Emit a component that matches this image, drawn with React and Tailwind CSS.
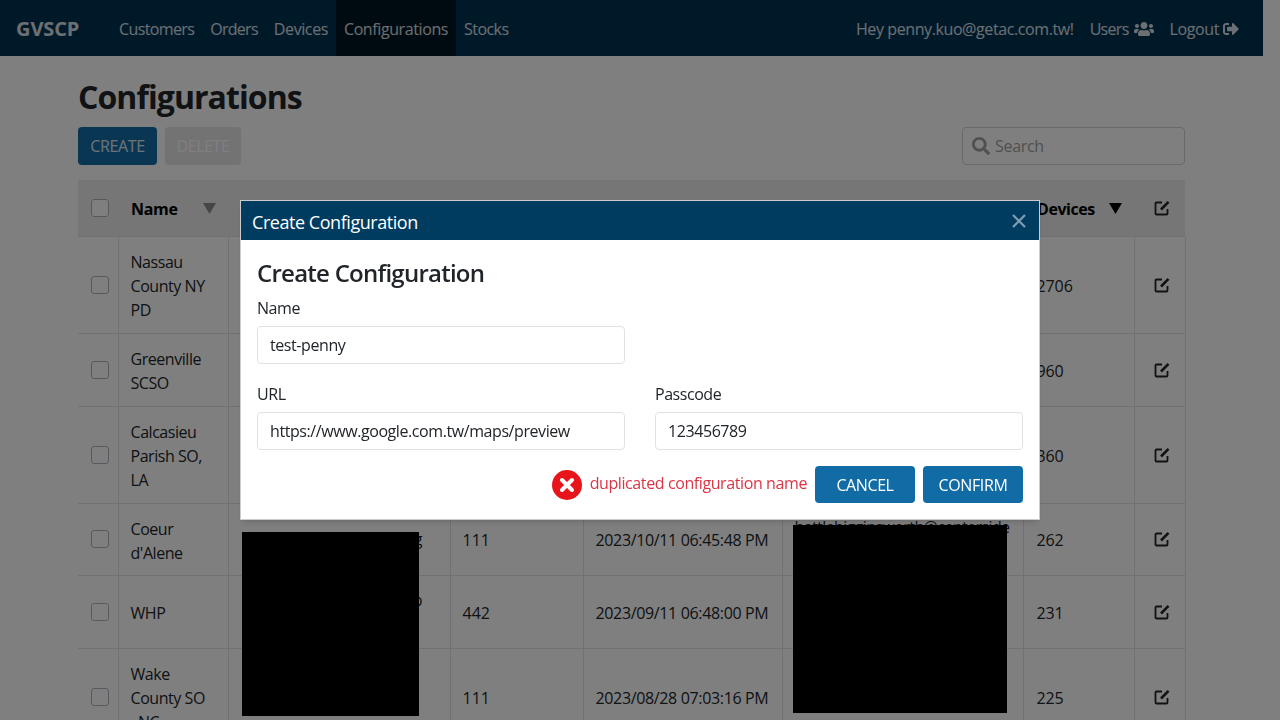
import React from 'react';
import { FaUsers, FaSignOutAlt, FaSearch } from 'react-icons/fa';

const navLinks = [
  { label: 'Customers', tracking: 'tracking-[-0.62px]' },
  { label: 'Orders', tracking: 'tracking-[-0.72px]' },
  { label: 'Devices', tracking: 'tracking-[-0.4px]' },
  { label: 'Configurations', tracking: 'tracking-[-0.4px]' },
  { label: 'Stocks', tracking: 'tracking-[-0.55px]' },
];

const rows = [
  { name: ['Nassau', 'County NY', 'PD'], devices: '2706' },
  { name: ['Greenville', 'SCSO'], devices: '960' },
  { name: ['Calcasieu', 'Parish SO,', 'LA'], devices: '360' },
  {
    name: ['Coeur', "d'Alene"],
    pad: 'pt-[13px] pb-[10px]',
    peek: ['g'],
    count: '111',
    date: '2023/10/11 06:45:48 PM',
    email: ['battlehigginsworth@centerside', '\u00a0'],
    devices: '262',
  },
  { name: ['WHP'], peek: ['p', '\u00a0'], count: '442', date: '2023/09/11 06:48:00 PM', devices: '231' },
  { name: ['Wake', 'County SO', ', NC'], count: '111', date: '2023/08/28 07:03:16 PM', devices: '225' },
];

const Lines = ({ items = [] }) => items.map((line, i) => <div key={i}>{line}</div>);

const EditIcon = () => (
  <svg width="16" height="16" viewBox="0 0 16 16" className="inline-block" fill="none" stroke="currentColor">
    <path d="M8 2.5H2.5a1 1 0 0 0-1 1v10a1 1 0 0 0 1 1h10a1 1 0 0 0 1-1V9" strokeWidth="1.8" />
    <path d="M7 9.5 14.5 1.8" strokeWidth="2.6" />
  </svg>
);

const SortArrow = ({ className }) => (
  <svg width="13" height="11" viewBox="0 0 13 11" className={className}>
    <polygon points="0,0 13,0 6.5,11" fill="currentColor" />
  </svg>
);

const Checkbox = () => (
  <span className="block w-[18px] h-[18px] bg-white border border-[#adb5bd] rounded-[3px] ml-[13px]" />
);

const Field = ({ label, value }) => (
  <div>
    <div className="h-[24px] leading-[24px] mb-[6px] text-[#212529] tracking-[-0.45px]">{label}</div>
    <div className="h-[38px] border border-[#dee2e6] rounded-[4px] pl-[12px] leading-[36px] text-[#212529] tracking-[-0.42px]">
      {value}
    </div>
  </div>
);

const App = () => {
  return (
    <div className="relative w-[1280px] h-[720px] overflow-hidden bg-white font-['Open_Sans','Noto_Sans',sans-serif] text-[16px] text-[#212529]">
      <div className="w-[1263px]">

        {/* NAVBAR */}
        <nav className="h-[56px] bg-[#003253] flex items-center justify-between pl-[16px] pr-[16px] text-white/85 tracking-[-0.4px]">
          <div className="flex items-center h-full">
            <span className="text-[20px] font-bold w-[95px] pt-[2px] tracking-[-0.1px] text-white/85">GVSCP</span>
            {navLinks.map((link) => (
              <a
                key={link.label}
                className={`h-full flex items-center px-2 pt-[2px] ${link.tracking} ${link.label === 'Configurations' ? 'bg-[#001622]' : ''}`}
              >
                {link.label}
              </a>
            ))}
          </div>
          <div className="flex items-center h-full pt-[2px]">
            <span className="px-2 tracking-[-0.4px]">Hey penny.kuo@getac.com.tw!</span>
            <a className="px-2 flex items-center gap-[5px] tracking-[-0.7px]">Users <FaUsers className="w-[20px] h-[16px]" /></a>
            <a className="px-2 flex items-center gap-[4px]">Logout <FaSignOutAlt className="w-[16px] h-[16px]" /></a>
          </div>
        </nav>

        <main className="px-[78px]">
          <h1 className="text-[32px] leading-[40px] font-bold mt-[21px] mb-[10px] tracking-[-0.93px]">Configurations</h1>

          {/* TOOLBAR */}
          <div className="flex items-center justify-between mb-[15px]">
            <div className="flex gap-[8px]">
              <button className="h-[38px] w-[79px] bg-[#116ca6] rounded-[4px] text-white/85 tracking-[-0.4px]">CREATE</button>
              <button className="h-[38px] w-[76px] bg-[#e6e6e6] rounded-[4px] text-[#ffffff] tracking-[-0.4px]">DELETE</button>
            </div>
            <div className="w-[223px] h-[38px] border border-[#ced4da] rounded-[4px] flex items-center pl-[9px] gap-[5px] text-[#a0a0a0] tracking-[-0.3px]">
              <FaSearch className="w-[18px] h-[18px]" />
              Search
            </div>
          </div>

          {/* TABLE */}
          <table className="w-[1107px] table-fixed border-collapse">
            <colgroup>
              <col className="w-[40px]" />
              <col className="w-[110px]" />
              <col className="w-[222px]" />
              <col className="w-[133px]" />
              <col className="w-[199px]" />
              <col className="w-[241px]" />
              <col className="w-[111px]" />
              <col className="w-[51px]" />
            </colgroup>
            <thead>
              <tr className="h-[56px] bg-[#ececec] text-left">
                <th className="px-0"><Checkbox /></th>
                <th className="pl-[13px] pt-[2px] font-bold tracking-[-0.3px] text-black">
                  <div className="flex items-center justify-between pr-[12px]">
                    Name <SortArrow className="text-[#8c8c8c]" />
                  </div>
                </th>
                <th />
                <th />
                <th />
                <th />
                <th className="pl-[14px] pt-[2px] font-bold tracking-[-0.45px] text-black">
                  <div className="flex items-center justify-between pr-[12px]">
                    Devices <SortArrow className="text-black" />
                  </div>
                </th>
                <th className="text-center font-normal pl-[4px] pb-[2px]"><EditIcon /></th>
              </tr>
            </thead>
            <tbody>
              {rows.map((row) => (
                <tr key={row.devices} className="border-t border-[#dee2e6]">
                  <td className="border-r border-[#dee2e6]"><Checkbox /></td>
                  <td className={`border-r border-[#dee2e6] px-[12px] leading-[24px] tracking-[-0.45px] ${row.pad || 'pt-[13px] pb-[11px]'}`}>
                    <Lines items={row.name} />
                  </td>
                  <td className="border-r border-[#dee2e6] pr-[27px] py-[12px] text-right leading-[24px]">
                    <Lines items={row.peek} />
                  </td>
                  <td className="border-r border-[#dee2e6] px-[12px] pt-[2px] leading-[24px]">{row.count}</td>
                  <td className="border-r border-[#dee2e6] px-[12px] pt-[2px] whitespace-nowrap tracking-[-0.35px]">{row.date}</td>
                  <td className="border-r border-[#dee2e6] px-[12px] leading-[24px] whitespace-nowrap tracking-[-0.6px]">
                    <Lines items={row.email} />
                  </td>
                  <td className="border-r border-[#dee2e6] px-[13px] pt-[2px] tracking-[-0.1px]">{row.devices}</td>
                  <td className="border-r border-[#dee2e6] text-center pl-[4px] pb-[3px]"><EditIcon /></td>
                </tr>
              ))}
            </tbody>
          </table>
        </main>
      </div>

      {/* MODAL */}
      <div className="fixed inset-0 bg-black/50 flex justify-center pt-[200px]">
        <div className="w-[800px] h-[320px] bg-white border border-black/20 shadow-md">
          <div className="h-[39px] bg-[#003c60] text-white flex items-center justify-between pl-[11px] pr-[13px]">
            <span className="text-[18px] tracking-[-0.45px] pt-[3px]">Create Configuration</span>
            <svg width="14" height="14" viewBox="0 0 14 14" className="text-white/50" stroke="currentColor" strokeWidth="2.2">
              <path d="M1 1 13 13M13 1 1 13" />
            </svg>
          </div>

          <div className="px-[16px] pt-[16px]">
            <h2 className="text-[24px] leading-[34px] font-semibold tracking-[-0.75px] mb-[6px]">Create Configuration</h2>
            <div className="grid grid-cols-2 gap-x-[30px] gap-y-[18px]">
              <Field label="Name" value="test-penny" />
              <div />
              <Field label="URL" value="https://www.google.com.tw/maps/preview" />
              <Field label="Passcode" value="123456789" />
            </div>

            <div className="flex items-center justify-end mt-[16px]">
              <svg width="30" height="30" viewBox="0 0 30 30" className="mr-[8px]">
                <circle cx="15" cy="15" r="15" fill="#e8141c" />
                <path d="M10 10 20 20M20 10 10 20" stroke="#fff" strokeWidth="4" strokeLinecap="round" />
              </svg>
              <span className="text-[#dc3545] mr-[8px] tracking-[-0.4px] -mt-[4px]">duplicated configuration name</span>
              <button className="h-[37px] w-[100px] bg-[#116ca6] text-white rounded-[4px] tracking-[-0.4px]">CANCEL</button>
              <button className="h-[37px] w-[100px] bg-[#116ca6] text-white rounded-[4px] ml-[8px] tracking-[-0.4px]">CONFIRM</button>
            </div>
          </div>
        </div>
      </div>

      {/* REDACTED BLOCKS */}
      <div className="absolute left-[242px] top-[532px] w-[177px] h-[184px] bg-black" />
      <div className="absolute left-[793px] top-[525px] w-[214px] h-[188px] bg-black" />
    </div>
  );
};

export default App;
